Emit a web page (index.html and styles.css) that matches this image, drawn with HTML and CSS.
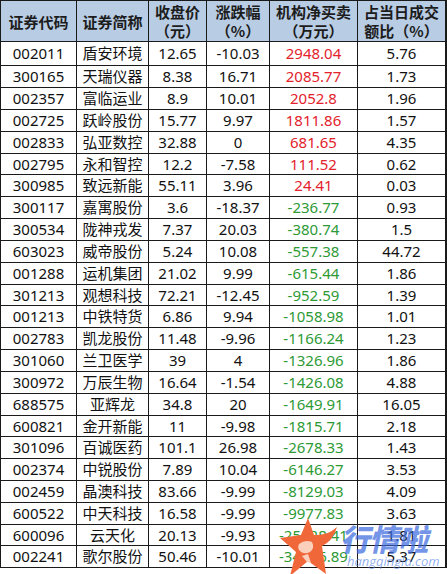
FILE: index.html
```html
<!DOCTYPE html>
<html lang="zh-CN">
<head>
<meta charset="utf-8">
<link rel="stylesheet" href="styles.css">
</head>
<body>
<div class="page">
  <div class="sheet">
    <div class="h">证券代码</div><div class="h">证券简称</div><div class="h">收盘价<br>（元）</div><div class="h">涨跌幅<br>（%）</div><div class="h">机构净买卖<br>（万元）</div><div class="h">占当日成交<br>额比（%）</div>
    <div>002011</div><div>盾安环境</div><div>12.65</div><div>-10.03</div><div class="r">2948.04</div><div>5.76</div>
    <div>300165</div><div>天瑞仪器</div><div>8.38</div><div>16.71</div><div class="r">2085.77</div><div>1.73</div>
    <div>002357</div><div>富临运业</div><div>8.9</div><div>10.01</div><div class="r">2052.8</div><div>1.96</div>
    <div>002725</div><div>跃岭股份</div><div>15.77</div><div>9.97</div><div class="r">1811.86</div><div>1.57</div>
    <div>002833</div><div>弘亚数控</div><div>32.88</div><div>0</div><div class="r">681.65</div><div>4.35</div>
    <div>002795</div><div>永和智控</div><div>12.2</div><div>-7.58</div><div class="r">111.52</div><div>0.62</div>
    <div>300985</div><div>致远新能</div><div>55.11</div><div>3.96</div><div class="r">24.41</div><div>0.03</div>
    <div>300117</div><div>嘉寓股份</div><div>3.6</div><div>-18.37</div><div class="g">-236.77</div><div>0.93</div>
    <div>300534</div><div>陇神戎发</div><div>7.37</div><div>20.03</div><div class="g">-380.74</div><div>1.5</div>
    <div>603023</div><div>威帝股份</div><div>5.24</div><div>10.08</div><div class="g">-557.38</div><div>44.72</div>
    <div>001288</div><div>运机集团</div><div>21.02</div><div>9.99</div><div class="g">-615.44</div><div>1.86</div>
    <div>301213</div><div>观想科技</div><div>72.21</div><div>-12.45</div><div class="g">-952.59</div><div>1.39</div>
    <div>001213</div><div>中铁特货</div><div>6.86</div><div>9.94</div><div class="g">-1058.98</div><div>1.01</div>
    <div>002783</div><div>凯龙股份</div><div>11.48</div><div>-9.96</div><div class="g">-1166.24</div><div>1.23</div>
    <div>301060</div><div>兰卫医学</div><div>39</div><div>4</div><div class="g">-1326.96</div><div>1.86</div>
    <div>300972</div><div>万辰生物</div><div>16.64</div><div>-1.54</div><div class="g">-1426.08</div><div>4.88</div>
    <div>688575</div><div>亚辉龙</div><div>34.8</div><div>20</div><div class="g">-1649.91</div><div>16.05</div>
    <div>600821</div><div>金开新能</div><div>11</div><div>-9.98</div><div class="g">-1815.71</div><div>2.18</div>
    <div>301096</div><div>百诚医药</div><div>101.1</div><div>26.98</div><div class="g">-2678.33</div><div>1.43</div>
    <div>002374</div><div>中锐股份</div><div>7.89</div><div>10.04</div><div class="g">-6146.27</div><div>3.53</div>
    <div>002459</div><div>晶澳科技</div><div>83.66</div><div>-9.99</div><div class="g">-8129.03</div><div>4.09</div>
    <div>600522</div><div>中天科技</div><div>16.58</div><div>-9.99</div><div class="g">-9977.83</div><div>3.63</div>
    <div>600096</div><div>云天化</div><div>20.13</div><div>-9.93</div><div class="g">-25028.41</div><div>1.81</div>
    <div>002241</div><div>歌尔股份</div><div>50.46</div><div>-10.01</div><div class="g">-34566.89</div><div>5.37</div>
  </div>
  <svg class="star" width="64" height="62" viewBox="0 0 64 62">
    <path d="M31 4 L37 21 Q50 22 60 13 Q56 27 45 32 L49 60 L31 47 L13 62 L19 38 L3 24 L24 21 Z" fill="#f0683a"/>
    <path d="M22 30 Q28 25 35 28 Q38 34 33 38 Q27 41 23 37 Q20 34 22 30 Z" fill="#fad0bc"/>
    <path d="M25 42 L31 40 L34 49 L30 48 Z" fill="#fad0bc"/>
  </svg>
  <div class="bname">行情啦</div>
  <div class="burl">hangqingla.com</div>
</div>
</body>
</html>
```
FILE: styles.css
```css
html, body {
  margin: 0;
  padding: 0;
  background: #ffffff;
}
.page {
  position: relative;
  width: 447px;
  height: 574px;
  overflow: hidden;
}
.sheet {
  display: grid;
  width: 446px;
  grid-template-columns: 75px 71px 57px 62px 87px 87px;
  grid-template-rows: 40px 23px 21px 21px 21px 21px 20px 21px 21px 21px 21px 21px 20px 21px 21px 21px 21px 21px 20px 21px 21px 21px 21px 20px 21px;
  gap: 1px;
  padding: 1px 0 1px 1px;
  background: #1a1a1a;
  font-family: "Noto Sans", "Noto Sans CJK SC", sans-serif;
  font-size: 15px;
  color: #111111;
}
.sheet > div {
  background: #ffffff;
  display: flex;
  align-items: center;
  justify-content: center;
  text-align: center;
  line-height: 19px;
  white-space: nowrap;
}
.sheet > .h {
  background: #b8cce4;
  font-family: "Noto Sans CJK SC", sans-serif;
  font-weight: bold;
  color: #1c1c1c;
  line-height: 19px;
}
.sheet > .r { color: #e3222c; }
.sheet > .g { color: #2e9a36; }
.star {
  position: absolute;
  left: 277px;
  top: 514px;
  display: block;
}
.bname {
  position: absolute;
  left: 343px;
  top: 521px;
  width: 96px;
  font-family: "Noto Sans CJK SC", sans-serif;
  font-weight: 900;
  font-size: 30px;
  line-height: 34px;
  letter-spacing: -1px;
  color: rgba(62, 108, 222, 0.72);
  transform: skewX(-12deg);
  white-space: nowrap;
}
.burl {
  position: absolute;
  left: 347px;
  top: 554px;
  font-family: "Open Sans", sans-serif;
  font-style: italic;
  font-size: 13px;
  line-height: 15px;
  color: rgba(95, 140, 232, 0.7);
  white-space: nowrap;
}
```
